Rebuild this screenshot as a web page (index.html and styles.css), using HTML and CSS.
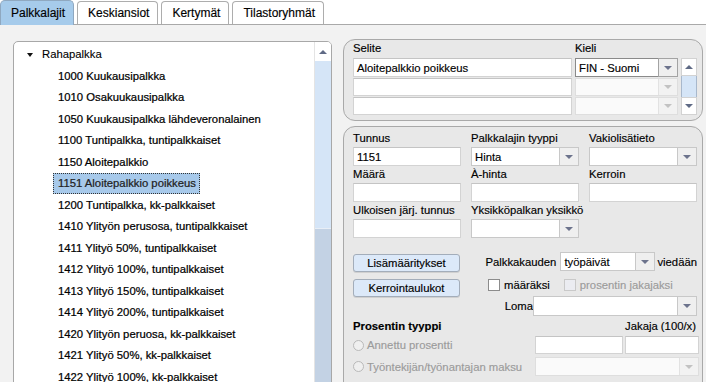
FILE: index.html
```html
<!DOCTYPE html>
<html lang="fi">
<head>
    <meta charset="UTF-8">
    <title>Palkkalajit</title>
    <link rel="stylesheet" href="styles.css">
</head>
<body>
    <div class="tabs">
        <div class="tab active">Palkkalajit</div>
        <div class="tab">Keskiansiot</div>
        <div class="tab">Kertymät</div>
        <div class="tab">Tilastoryhmät</div>
    </div>

    <div class="page">
        <!-- palkkalajipuu -->
        <div class="tree">
            <div class="tree-list">
                <div class="tree-row root"><span class="caret"></span>Rahapalkka</div>
                <div class="tree-row">1000 Kuukausipalkka</div>
                <div class="tree-row">1010 Osakuukausipalkka</div>
                <div class="tree-row">1050 Kuukausipalkka lähdeveronalainen</div>
                <div class="tree-row">1100 Tuntipalkka, tuntipalkkaiset</div>
                <div class="tree-row">1150 Aloitepalkkio</div>
                <div class="tree-row"><span class="selected">1151 Aloitepalkkio poikkeus</span></div>
                <div class="tree-row">1200 Tuntipalkka, kk-palkkaiset</div>
                <div class="tree-row">1410 Ylityön perusosa, tuntipalkkaiset</div>
                <div class="tree-row">1411 Ylityö 50%, tuntipalkkaiset</div>
                <div class="tree-row">1412 Ylityö 100%, tuntipalkkaiset</div>
                <div class="tree-row">1413 Ylityö 150%, tuntipalkkaiset</div>
                <div class="tree-row">1414 Ylityö 200%, tuntipalkkaiset</div>
                <div class="tree-row">1420 Ylityön peruosa, kk-palkkaiset</div>
                <div class="tree-row">1421 Ylityö 50%, kk-palkkaiset</div>
                <div class="tree-row">1422 Ylityö 100%, kk-palkkaiset</div>
            </div>
            <div class="scrollbar">
                <div class="sb-btn"><span class="tri up"></span></div>
                <div class="sb-thumb"></div>
                <div class="sb-track"></div>
            </div>
        </div>

        <div class="side">
            <!-- selitteet kielittäin -->
            <div class="group lang">
                <div class="lang-grid">
                    <label>Selite</label>
                    <label>Kieli</label>
                    <span></span>
                    <div class="field">Aloitepalkkio poikkeus</div>
                    <div class="combo focus"><span class="value">FIN - Suomi</span><span class="arrow"></span></div>
                    <div class="mini-scroll">
                        <div class="ms-btn"><span class="tri up"></span></div>
                        <div class="ms-thumb"></div>
                        <div class="ms-btn"><span class="tri down"></span></div>
                    </div>
                    <div class="field"></div>
                    <div class="combo disabled"><span class="value"></span><span class="arrow"></span></div>
                    <div class="field"></div>
                    <div class="combo disabled"><span class="value"></span><span class="arrow"></span></div>
                </div>
            </div>

            <!-- palkkalajin tiedot -->
            <div class="group main">
                <div class="main-grid">
                    <label>Tunnus</label>
                    <label>Palkkalajin tyyppi</label>
                    <label>Vakiolisätieto</label>
                    <div class="field">1151</div>
                    <div class="combo"><span class="value">Hinta</span><span class="arrow"></span></div>
                    <div class="combo"><span class="value"></span><span class="arrow"></span></div>
                    <label>Määrä</label>
                    <label>À-hinta</label>
                    <label>Kerroin</label>
                    <div class="field"></div>
                    <div class="field"></div>
                    <div class="field"></div>
                    <label>Ulkoisen järj. tunnus</label>
                    <label>Yksikköpalkan yksikkö</label>
                    <span></span>
                    <div class="field"></div>
                    <div class="combo"><span class="value"></span><span class="arrow"></span></div>
                </div>

                <div class="actions">
                    <div class="btn-col">
                        <button class="btn">Lisämääritykset</button>
                        <button class="btn">Kerrointaulukot</button>
                    </div>
                    <div class="period-col">
                        <div class="period-row">
                            <span>Palkkakauden</span>
                            <div class="combo period"><span class="value">työpäivät</span><span class="arrow"></span></div>
                            <span class="after">viedään</span>
                        </div>
                        <div class="check-row">
                            <span class="check-item"><span class="checkbox"></span>määräksi</span>
                            <span class="check-item disabled"><span class="checkbox"></span>prosentin jakajaksi</span>
                        </div>
                        <div class="period-row">
                            <span>Loma</span>
                            <div class="combo loma"><span class="value"></span><span class="arrow"></span></div>
                        </div>
                    </div>
                </div>

                <div class="percent-grid">
                    <div class="section-title">Prosentin tyyppi</div>
                    <div class="divisor">Jakaja (100/x)</div>
                    <div class="radio-item"><span class="radio"></span>Annettu prosentti</div>
                    <div class="field"></div>
                    <div class="field"></div>
                    <div class="radio-item"><span class="radio"></span>Työntekijän/työnantajan maksu</div>
                    <div class="combo disabled wide"><span class="value"></span><span class="arrow"></span></div>
                </div>
            </div>
        </div>
    </div>
</body>
</html>
```

FILE: styles.css
```css
/* perus */
body {
    margin: 0;
    font-family: "Liberation Sans", Arial, sans-serif;
    font-size: 11.3px;
    color: #000;
    -webkit-text-stroke: 0.15px;
    background: #f2f2f2;
    width: 706px;
    height: 382px;
    overflow: hidden;
}

label {
    display: block;
    white-space: nowrap;
}

/* välilehdet */
.tabs {
    display: flex;
    align-items: flex-end;
    height: 25px;
    background: #ffffff;
    border-bottom: 1px solid #a9a9a9;
    box-sizing: border-box;
}

.tab {
    height: 23px;
    line-height: 23px;
    padding: 0 8px 0 10px;
    margin-right: 3px;
    font-size: 12px;
    background: #ffffff;
    border: 1px solid #adadad;
    border-bottom: none;
    border-radius: 4px 4px 0 0;
    box-sizing: border-box;
    white-space: nowrap;
}

.tab.active {
    height: 25px;
    line-height: 25px;
    margin-bottom: -1px;
    background: #a6cbeb;
    border-color: #8fa8c0;
    border-radius: 5px 5px 0 0;
}

/* sisältö */
.page {
    display: flex;
    align-items: flex-start;
    padding: 14px 0 0 13px;
    height: 357px;
    box-sizing: border-box;
    overflow: hidden;
}

/* puu */
.tree {
    display: flex;
    width: 319px;
    height: 360px;
    margin-top: 2px;
    background: #ffffff;
    border: 1px solid #a8a8a8;
    border-radius: 5px;
    box-sizing: border-box;
    overflow: hidden;
    flex-shrink: 0;
}

.tree-list {
    flex: 1;
    padding-top: 2px;
}

.tree-row {
    height: 21.5px;
    line-height: 21.5px;
    padding-left: 44px;
    white-space: nowrap;
    -webkit-text-stroke: 0.22px;
}

.tree-row.root {
    display: flex;
    align-items: center;
    padding-left: 13px;
    -webkit-text-stroke: 0.1px;
}

.caret {
    width: 0;
    height: 0;
    border-left: 3.5px solid transparent;
    border-right: 3.5px solid transparent;
    border-top: 4px solid #111;
    margin-right: 9px;
}

.selected {
    display: inline-block;
    height: 21px;
    line-height: 19px;
    padding: 0 3px 0 4px;
    margin-left: -5px;
    color: #222;
    background: #a7c9ea;
    border: 1px dotted #333;
    box-sizing: border-box;
    vertical-align: top;
}

.scrollbar {
    width: 16px;
    display: flex;
    flex-direction: column;
    border-left: 1px solid #e4e4e4;
}

.sb-btn {
    height: 19px;
    display: flex;
    justify-content: center;
    padding-top: 8px;
    box-sizing: border-box;
    background: #ffffff;
}

.sb-thumb {
    height: 167px;
    background: #d5e5f7;
    border-bottom: 1px solid #e8eef6;
}

.sb-track {
    flex: 1;
    background: #c3d2e4;
}

.tri {
    width: 0;
    height: 0;
    border-left: 4px solid transparent;
    border-right: 4px solid transparent;
}

.tri.up {
    border-bottom: 4px solid #5f6a85;
}

.tri.down {
    border-top: 4px solid #5f6a85;
}

/* oikea puoli */
.side {
    width: 360px;
    margin-left: 11px;
    flex-shrink: 0;
}

.group {
    background: #e8e8e8;
    border: 1px solid #a9a9a9;
    border-radius: 12px;
    padding-left: 9px;
    box-sizing: border-box;
}

.group.lang {
    height: 82px;
}

.group.main {
    height: 270px;
    margin-top: 5px;
    padding-top: 3px;
}

.lang-grid {
    display: grid;
    grid-template-columns: 219px 103px 16px;
    grid-template-rows: 17px 19px 18px 18px;
    column-gap: 3px;
    row-gap: 1px;
}

.lang-grid label,
.main-grid label {
    line-height: 17px;
}

.mini-scroll {
    grid-column: 3;
    grid-row: 2 / 5;
    display: flex;
    flex-direction: column;
}

.ms-btn {
    height: 18px;
    background: #ffffff;
    border: 1px solid #d2d2d2;
    box-sizing: border-box;
    display: flex;
    justify-content: center;
    align-items: center;
}

.ms-thumb {
    flex: 1;
    background: #d5e5f7;
    border: 1px solid #a8b8cc;
    border-top: none;
    border-bottom: none;
}

/* kentät */
.field {
    background: #ffffff;
    border: 1px solid #d3d3d3;
    border-top-color: #c4c4c4;
    box-sizing: border-box;
    padding-left: 3px;
    display: flex;
    align-items: center;
    white-space: nowrap;
}

.combo {
    display: flex;
    background: #ffffff;
    border: 1px solid #c8c8c8;
    box-sizing: border-box;
}

.combo .value {
    flex: 1;
    padding-left: 3px;
    display: flex;
    align-items: center;
    white-space: nowrap;
}

.combo .arrow {
    width: 18px;
    background: #efefef;
    border-left: 1px solid #c8c8c8;
    display: flex;
    justify-content: center;
    align-items: center;
}

.combo .arrow::after {
    content: "";
    border-left: 4px solid transparent;
    border-right: 4px solid transparent;
    border-top: 4px solid #6c738c;
}

.combo.focus {
    border-color: #8a8a8a;
}

.combo.focus .arrow {
    border: 1px solid #a3a3a3;
    margin: -1px -1px -1px 0;
}

.combo.disabled {
    background: #fafafa;
    border-color: #dedede;
}

.combo.disabled .arrow {
    background: #f2f2f2;
    border-left-color: #e2e2e2;
}

.combo.disabled .arrow::after {
    border-top-color: #c2c2c2;
}

.main-grid {
    display: grid;
    grid-template-columns: 108px 108px 108px;
    grid-template-rows: 17px 19px 17px 19px 17px 19px;
    column-gap: 10px;
}

/* toiminnot */
.actions {
    display: flex;
    margin-top: 14px;
    padding-right: 5px;
}

.btn-col {
    width: 107px;
    display: flex;
    flex-direction: column;
    gap: 7px;
    padding-top: 2px;
}

.btn {
    height: 18px;
    padding: 0;
    font-family: inherit;
    font-size: inherit;
    color: #000;
    -webkit-text-stroke: 0.15px;
    background: #dce9f9;
    border: 1px solid #a3adba;
    border-radius: 3px;
    box-shadow: 0 1px 0 #d0d0d0;
}

.period-col {
    flex: 1;
}

.period-row {
    display: flex;
    justify-content: flex-end;
    align-items: center;
    height: 19px;
}

.period-row + .check-row + .period-row {
    margin-top: 4px;
}

.combo.period {
    width: 95px;
    height: 19px;
    margin-left: 4px;
}

.period-row .after {
    margin-left: 2px;
}

.combo.loma {
    width: 164px;
    height: 20px;
}

.check-row {
    display: flex;
    gap: 14px;
    margin-top: 7px;
    padding-left: 28px;
    height: 14px;
}

.check-item {
    display: flex;
    align-items: center;
    gap: 4px;
}

.checkbox {
    width: 12px;
    height: 12px;
    background: #ffffff;
    border: 1px solid #8c8c8c;
    box-sizing: border-box;
}

.check-item.disabled {
    color: #9b9b9b;
}

.check-item.disabled .checkbox {
    background: #ebecf1;
    border-color: #c9c9c9;
}

/* prosentti */
.percent-grid {
    display: grid;
    grid-template-columns: 180px 88px 74px;
    grid-template-rows: 14px 18px 19px;
    column-gap: 2px;
    row-gap: 3px;
    margin-top: 4px;
}

.section-title {
    font-weight: bold;
    line-height: 14px;
    white-space: nowrap;
}

.divisor {
    grid-column: 2 / 4;
    text-align: right;
    padding-right: 3px;
    line-height: 14px;
}

.radio-item {
    display: flex;
    align-items: center;
    gap: 3px;
    color: #9b9b9b;
    white-space: nowrap;
}

.radio {
    width: 11px;
    height: 11px;
    border: 1px solid #b9b9b9;
    border-radius: 50%;
    background: #efefef;
    box-sizing: border-box;
}

.combo.wide {
    grid-column: 2 / 4;
}
```
